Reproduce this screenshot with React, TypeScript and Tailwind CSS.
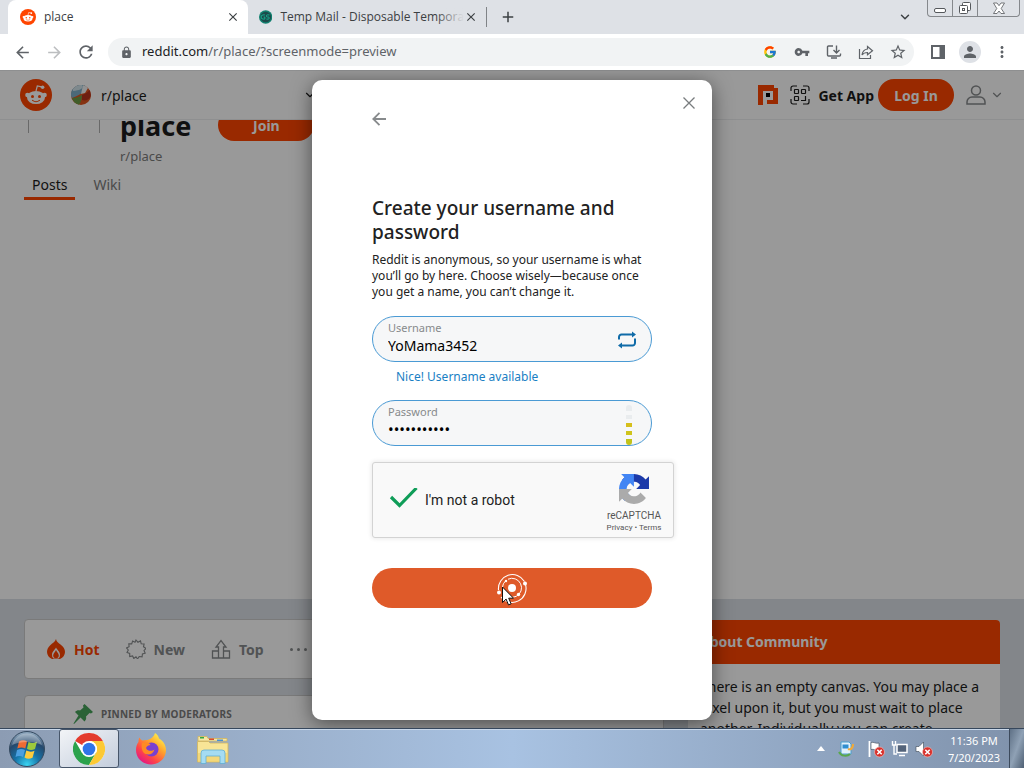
import { useState } from "react";
import type { ReactNode } from "react";
import { FcGoogle } from "react-icons/fc";
import {
  MdArrowBack,
  MdArrowForward,
  MdClose,
  MdLock,
  MdMoreVert,
  MdAdd,
  MdPerson,
  MdRefresh,
  MdStarBorder,
  MdVpnKey,
} from "react-icons/md";
import { ChevronDown } from "lucide-react";
import clsx from "clsx";

function SnooLogo({ className }: { className?: string }) {
  return (
    <svg viewBox="0 0 32 32" className={className} aria-hidden="true">
      <circle cx="16" cy="16" r="16" fill="#ff4500" />
      <path d="M16 12l1.300-5 4.500.8" fill="none" stroke="#fff" strokeWidth="1.2" />
      <circle cx="22.600" cy="8.200" r="1.800" fill="#fff" />
      <circle cx="7.400" cy="16" r="2.200" fill="#fff" />
      <circle cx="24.600" cy="16" r="2.200" fill="#fff" />
      <ellipse cx="16" cy="18.500" rx="9" ry="6.600" fill="#fff" />
      <circle cx="12.500" cy="17.400" r="1.500" fill="#ff4500" />
      <circle cx="19.500" cy="17.400" r="1.500" fill="#ff4500" />
      <path d="M12.500 21.400c2 1.500 5 1.500 7 0" fill="none" stroke="#ff4500" strokeWidth="1.1" strokeLinecap="round" />
    </svg>
  );
}

function TempMailIcon() {
  return (
    <svg viewBox="0 0 16 16" className="size-4" aria-hidden="true">
      <circle cx="8" cy="8" r="8" fill="#11806f" />
      <circle cx="8" cy="8" r="6.400" fill="#1d4a4b" />
      <path
        d="M7 5.500H5A2.500 2.500 0 0 0 5 10.500h2V8H5.500M12.500 5.500h-2.500a1.200 1.200 0 0 0 0 2.500h1a1.200 1.200 0 0 1 0 2.500H8.800"
        fill="none"
        stroke="#17b897"
        strokeWidth="1.100"
      />
    </svg>
  );
}

function TabStrip() {
  return (
    <div className="flex h-[34px] shrink-0 bg-[#dee1e6] pl-2 font-['Open_Sans',sans-serif] text-[12px] text-[#3c4043]">
      <div className="flex w-[240px] items-center rounded-t-lg bg-white px-3">
        <SnooLogo className="size-4" />
        <span className="ml-2 flex-1">place</span>
        <button aria-label="Close tab" className="-mr-1 text-[#3c4043]">
          <MdClose size={14} />
        </button>
      </div>
      <div className="flex w-[239px] items-center pl-[11px]">
        <TempMailIcon />
        <span className="relative ml-2 whitespace-nowrap">
          Temp Mail - Disposable Tempora
          <span className="absolute inset-y-0 right-0 w-7 bg-gradient-to-r from-transparent to-[#dee1e6]" />
        </span>
        <button aria-label="Close tab" className="ml-auto">
          <MdClose size={14} />
        </button>
        <span className="ml-2 h-5 w-px bg-[#808387]" />
      </div>
      <button aria-label="New tab" className="ml-3">
        <MdAdd size={18} />
      </button>
      <button aria-label="Search tabs" className="mr-[15px] ml-auto">
        <ChevronDown size={14} strokeWidth={2.5} />
      </button>
      <WindowControls />
    </div>
  );
}

function WindowControls() {
  return (
    <div className="mr-1 flex h-[17px] w-[93px] divide-x divide-[#85888c] rounded-b border border-t-0 border-[#85888c]">
      <button aria-label="Minimize" className="grid w-[25px] place-items-center">
        <svg viewBox="0 0 14 14" className="size-3.5" aria-hidden="true">
          <rect x="1.500" y="7.500" width="11" height="4" rx="1.500" fill="#fff" stroke="#55585c" />
        </svg>
      </button>
      <button aria-label="Restore" className="grid w-[25px] place-items-center">
        <svg viewBox="0 0 14 14" className="size-3.5" fill="#fff" stroke="#55585c" aria-hidden="true">
          <rect x="4.500" y="1.500" width="8" height="8" rx="1" />
          <rect x="1.500" y="4.500" width="8" height="8" rx="1" />
          <rect x="4.500" y="7.500" width="2" height="2" />
        </svg>
      </button>
      <button aria-label="Close" className="grid flex-1 place-items-center">
        <svg viewBox="0 0 14 14" className="size-3.5" aria-hidden="true">
          <path
            d="M1.500 2h3.500l2 2.700 2-2.700h3.500L9.200 7.500l3.300 5H9L7 10 5 12.500H1.500L4.800 7.500z"
            fill="#fff"
            stroke="#55585c"
            strokeWidth=".8"
          />
        </svg>
      </button>
    </div>
  );
}

function BarButton({ label, children }: { label: string; children: ReactNode }) {
  return (
    <button aria-label={label} className="grid w-8 shrink-0 place-items-center text-[#5f6368]">
      {children}
    </button>
  );
}

function Toolbar() {
  return (
    <div className="flex h-9 shrink-0 items-center bg-white px-1.5">
      <BarButton label="Back">
        <MdArrowBack size={19} />
      </BarButton>
      <BarButton label="Forward">
        <MdArrowForward size={19} className="text-[#bcbec0]" />
      </BarButton>
      <BarButton label="Reload">
        <MdRefresh size={20} />
      </BarButton>
      <div className="ml-1.5 flex h-7 flex-1 items-center rounded-full bg-[#f1f3f4] pl-3 text-[13px]">
        <MdLock size={13} className="text-[#5f6368]" />
        <p className="ml-[9px] flex-1 text-[#5f6368]">
          <span className="text-[#202124]">reddit.com</span>/r/place/?screenmode=preview
        </p>
        <BarButton label="Google Lens">
          <FcGoogle size={14} />
        </BarButton>
        <BarButton label="Passwords">
          <MdVpnKey size={16} />
        </BarButton>
        <BarButton label="Install app">
          <svg viewBox="0 0 16 16" className="size-4" fill="none" stroke="currentColor" strokeWidth="1.4" aria-hidden="true">
            <path d="M7 2H2.500A1 1 0 0 0 1.500 3v8a1 1 0 0 0 1 1h11a1 1 0 0 0 1-1V9.500M10.500 1.500v7M7.500 6l3 3 3-3M5 14h6" />
          </svg>
        </BarButton>
        <BarButton label="Share">
          <svg viewBox="0 0 16 16" className="size-4" fill="none" stroke="currentColor" strokeWidth="1.2" aria-hidden="true">
            <path d="M1.500 5v9.500h11V11M9.500 2.500l5 4.200-5 4V8.500C7 8.500 5.300 9.200 4 11c.4-3.300 2.300-5.600 5.500-6z" />
          </svg>
        </BarButton>
        <BarButton label="Bookmark">
          <MdStarBorder size={18} />
        </BarButton>
      </div>
      <div className="ml-2 flex">
        <BarButton label="Side panel">
          <svg viewBox="0 0 14 14" className="size-3.5" aria-hidden="true">
            <path d="M1 1h12v12H1z" fill="none" stroke="currentColor" strokeWidth="2" />
            <path d="M8.500 0H14v14H8.500z" fill="currentColor" />
          </svg>
        </BarButton>
        <BarButton label="Profile">
          <span className="grid size-[22px] place-items-center rounded-full bg-[#dee1e6]">
            <MdPerson size={18} />
          </span>
        </BarButton>
        <BarButton label="Menu">
          <MdMoreVert size={18} />
        </BarButton>
      </div>
    </div>
  );
}

function PlaceBall() {
  return (
    <svg viewBox="0 0 20 20" className="size-5" aria-hidden="true">
      <circle cx="10" cy="10" r="10" fill="#e0551f" />
      <path d="M0 11A10 10 0 0 1 15 1.300C15 5 12 9 1 13z" fill="#7fb0c8" />
      <path d="M2 4a10 10 0 0 1 9-4c2 3-1 5-9 6z" fill="#d3e4ec" />
      <path d="M12 .2a10 10 0 0 1 5 2.800l-3 5-4 1z" fill="#f0f4f5" />
      <path d="M1 13c4 0 7-1 10-3 0 4-1 7-3 9.800A10 10 0 0 1 1 13z" fill="#6d9b45" />
      <path d="M11 10c3-1 6-3 7.500-5a10 10 0 0 1 1 7c-2 3-5 4-8.500 3z" fill="#b8321b" />
    </svg>
  );
}

function RedditHeader() {
  return (
    <header className="relative z-10 flex h-[50px] items-center border-y border-[#edeff1] bg-white px-5">
      <a href="#home" aria-label="Reddit home">
        <SnooLogo className="size-8" />
      </a>
      <button className="ml-[19px] flex w-[246px] items-center text-[14px] text-[#1c1c1c]">
        <PlaceBall />
        <span className="ml-2.5">r/place</span>
        <ChevronDown size={14} className="ml-auto" />
      </button>
      <div className="ml-auto flex items-center">
        <a href="#place" aria-label="Place">
          <svg viewBox="0 0 20 20" className="size-5" aria-hidden="true">
            <path d="M4 4h12v12H4z" fill="#fff" />
            <path d="M0 0h16v3h4v16H9v-4h6V6H5v14H0z" fill="#ff4500" />
            <path d="M8 8h4v4H8z" fill="#000" />
          </svg>
        </a>
        <button className="ml-3 flex items-center gap-2 text-[14px] font-bold text-[#1c1c1c]">
          <svg viewBox="0 0 20 20" className="size-5" fill="none" stroke="currentColor" strokeWidth="1.200" aria-hidden="true">
            <path d="M1 6V3a2 2 0 0 1 2-2h4M13 1h4a2 2 0 0 1 2 2v3M19 14v3a2 2 0 0 1-2 2h-4M7 19H3a2 2 0 0 1-2-2v-3" />
            <rect x="4.500" y="4.500" width="4" height="4" rx=".5" />
            <rect x="11.500" y="4.500" width="4" height="4" rx=".5" />
            <rect x="4.500" y="11.500" width="4" height="4" rx=".5" />
            <path d="M11 15.500h4.500V11" />
          </svg>
          Get App
        </button>
        <button className="ml-1 h-8 w-[76px] rounded-full bg-[#ff4500] text-[14px] font-bold text-white">Log In</button>
        <button aria-label="User menu" className="ml-3 flex items-center text-[#878a8c]">
          <svg viewBox="0 0 20 20" className="size-5" fill="none" stroke="currentColor" strokeWidth="1.500" aria-hidden="true">
            <circle cx="10" cy="5.500" r="4.500" />
            <path d="M1 19v-2a5 5 0 0 1 5-5h8a5 5 0 0 1 5 5v2z" />
          </svg>
          <ChevronDown size={14} className="ml-1" />
        </button>
      </div>
    </header>
  );
}

function CommunityBanner() {
  return (
    <div className="-mt-[11px] bg-white px-6">
      <div className="flex">
        <div className="ml-1 h-6 w-[72px] border-x border-[#b0b0b0]" />
        <div className="ml-5">
          <div className="flex gap-[27px]">
            <h1 className="text-[27px] leading-[34px] font-bold text-[#1c1c1c]">place</h1>
            <button className="h-8 w-24 rounded-full bg-[#ff4500] text-[14px] font-bold text-white">Join</button>
          </div>
          <p className="mt-1 text-[13px] leading-[18px] text-[#7c7c7c]">r/place</p>
        </div>
      </div>
      <nav className="mt-2 flex gap-2.5 text-[14px] leading-6 text-[#1c1c1c]">
        <a href="#posts" className="border-b-[3px] border-[#ff4500] px-2">
          Posts
        </a>
        <a href="#wiki" className="px-2 text-[#7c7c7c]">
          Wiki
        </a>
      </nav>
      <div className="h-[399px]" />
    </div>
  );
}

const sortIcons: Record<string, ReactNode> = {
  Hot: (
    <g>
      <path
        d="M10 0c.5 2.500 2 3.500 4.500 5.500C17.500 8 19 10 19 13a8 8 0 0 1-5 7H6a8 8 0 0 1-5-7c0-2.500 1-4.800 3-6.500C6.500 4 9 3 10 0z"
        fill="currentColor"
      />
      <path d="M10 8.500c.8 2 4 4 4 7a4.800 4.800 0 0 1-1.500 4h-5a4.800 4.800 0 0 1-1.500-4c0-3 3.200-5 4-7z" fill="#fff" />
      <path d="M10 11c.8 2 2.800 3.500 2.800 5.500a2.800 2.800 0 0 1-5.600 0c0-2 2-3.500 2.800-5.500z" fill="currentColor" />
    </g>
  ),
  New: (
    <path
      d="M10 1l1.900 2.200 2.600-1.300.7 2.900 2.900.2-.6 2.800L20 9.500l-2 2 1.200 2.700-2.800.8-.3 2.900-2.900-.4L11.500 20 10 17.800 7.800 19.500l-1.200-2.600-2.900.6v-3l-2.700-1L2.300 11 .5 8.900l2.600-1.200-.3-2.900 2.900.1.900-2.800L9 3.200z"
      fill="none"
      stroke="currentColor"
      strokeWidth="1.100"
    />
  ),
  Top: (
    <path
      d="M7.500 19V8H5l5-6.500L15 8h-2.500v11M7.500 12h-6v7h17v-7h-6M7.500 19h5"
      fill="none"
      stroke="currentColor"
      strokeWidth="1.300"
    />
  ),
};

function Feed() {
  return (
    <div className="flex gap-6 bg-[#dae0e6] px-6 pt-5">
      <main className="flex-1">
        <div className="flex h-[60px] items-center gap-[26px] rounded border border-[#ccc] bg-white pl-[21px] text-[14px] font-bold text-[#878a8c]">
          {Object.keys(sortIcons).map((name) => (
            <button key={name} className={clsx("flex items-center gap-2", name === "Hot" && "text-[#ff4500]")}>
              <svg viewBox="0 0 20 20" className="size-5" aria-hidden="true">
                {sortIcons[name]}
              </svg>
              {name}
            </button>
          ))}
          <button aria-label="More sorts" className="flex gap-1">
            <span className="size-[3px] rounded-full bg-current" />
            <span className="size-[3px] rounded-full bg-current" />
            <span className="size-[3px] rounded-full bg-current" />
          </button>
        </div>
        <article className="mt-4 flex h-40 items-start gap-2 rounded border border-[#ccc] bg-white pt-2 pl-12">
          <svg viewBox="0 0 20 20" className="size-5" fill="#46a35a" aria-hidden="true">
            <path d="M11.500 0L20 8l-2 1.500-1.500-.5-3.500 3.500c.5 2 0 3.500-1.500 5L7.500 13.500 1 20l-.500-.5L5.500 11.500 2 8c1.500-1.500 3-2 5-1.500L10.500 3.500 10 1.500z" />
          </svg>
          <span className="text-[10px] leading-5 font-bold tracking-wide text-[#7c7c7c]">PINNED BY MODERATORS</span>
        </article>
      </main>
      <aside className="w-[312px] pt-px">
        <section className="overflow-hidden rounded bg-white">
          <h2 className="bg-[#ff4500] p-3 text-[14px] leading-5 font-bold text-white">About Community</h2>
          <p className="p-3 text-[14px] leading-[21px] text-[#1c1c1c]">
            There is an empty canvas. You may place a pixel upon it, but you must wait to place another. Individually you
            can create
          </p>
        </section>
      </aside>
    </div>
  );
}

function StrengthMeter() {
  return (
    <span className="absolute top-1 right-[19px] flex flex-col gap-1" aria-hidden="true">
      <span className="h-1.5 w-1.5 rounded-t bg-[#e9ecee]" />
      <span className="h-1 w-1.5 bg-[#e9ecee]" />
      <span className="h-1 w-1.5 bg-[#d6bf1c]" />
      <span className="h-1 w-1.5 bg-[#cfc41c]" />
      <span className="h-1.5 w-1.5 rounded-b bg-[#c2c31a]" />
    </span>
  );
}

type FieldProps = {
  id: string;
  label: string;
  type: string;
  value: string;
  onChange: (value: string) => void;
  children: ReactNode;
};

function Field({ id, label, type, value, onChange, children }: FieldProps) {
  return (
    <div className="relative flex h-[46px] flex-col rounded-full border border-[#4a9ad4] bg-[#f6f7f8] px-[15px] pt-1">
      <label htmlFor={id} className="text-[11px] leading-[14px] text-[#878a8c]">
        {label}
      </label>
      <input
        id={id}
        type={type}
        value={value}
        onChange={(e) => onChange(e.target.value)}
        className={clsx(
          "h-5 w-[200px] bg-transparent text-black outline-none",
          type === "password" ? "text-[15px]" : "text-[14px]",
        )}
      />
      {children}
    </div>
  );
}

function Recaptcha() {
  return (
    <div className="mt-4 flex h-[76px] w-[302px] items-center rounded-[3px] border border-[#d3d3d3] bg-[#f9f9f9] pl-4 font-[Roboto,sans-serif] shadow-[0_0_4px_1px_rgba(0,0,0,0.08)]">
      <label className="flex flex-1 items-center gap-[7px] text-[14px] text-[#222]">
        <input type="checkbox" defaultChecked className="peer sr-only" />
        <svg viewBox="0 0 29 24" className="h-6 w-[29px]" aria-hidden="true">
          <path d="M2 9l8.500 8.500L27.500 0" fill="none" stroke="#0f9d58" strokeWidth="3.200" />
        </svg>
        I'm not a robot
      </label>
      <div className="flex w-[78px] flex-col items-center pt-2 text-[#555]">
        <svg viewBox="0 0 64 64" className="size-[30px]" aria-hidden="true">
          <path
            d="M64 31.955l-.033-1.370V4.687l-7.160 7.160C50.948 4.674 42.033.093 32.050.093c-10.400 0-19.622 4.960-25.458 12.640l11.736 11.860a15.550 15.550 0 0 1 4.754-5.334c2.050-1.600 4.952-2.906 8.968-2.906.485 0 .860.057 1.135.163 4.976.393 9.288 3.140 11.828 7.124l-8.307 8.307L64 31.953"
            fill="#1c3aa9"
          />
          <path
            d="M31.862.094l-1.370.033H4.594l7.160 7.160C4.580 13.147 0 22.060 0 32.046c0 10.400 4.960 19.622 12.640 25.458L24.500 45.768a15.550 15.550 0 0 1-5.334-4.754c-1.600-2.050-2.906-4.952-2.906-8.968 0-.485.057-.860.163-1.135.393-4.976 3.140-9.288 7.124-11.828l8.307 8.307L31.860.095"
            fill="#4285f4"
          />
          <path
            d="M.001 32.045l.033 1.370v25.898l7.160-7.160c5.860 7.173 14.774 11.754 24.760 11.754 10.400 0 19.622-4.960 25.458-12.640l-11.736-11.860a15.550 15.550 0 0 1-4.754 5.334c-2.050 1.600-4.952 2.906-8.968 2.906-.485 0-.860-.057-1.135-.163-4.976-.393-9.288-3.140-11.828-7.124l8.307-8.307c-10.522.040-22.400.066-27.295-.005"
            fill="#ababab"
          />
        </svg>
        <span className="mt-1.5 text-[10px] leading-3">reCAPTCHA</span>
        <span className="text-[8px] leading-3">
          <a href="#privacy">Privacy</a> • <a href="#terms">Terms</a>
        </span>
      </div>
    </div>
  );
}

function SignupModal() {
  const [username, setUsername] = useState("YoMama3452");
  const [password, setPassword] = useState("placepixel1");

  return (
    <div className="absolute inset-0 z-20 flex justify-center bg-black/40 pt-2.5 pb-2">
      <div
        role="dialog"
        aria-label="Sign up"
        className="relative w-[400px] rounded-[10px] bg-white px-[60px] pt-[31px] text-[#222] shadow-[0_4px_20px_rgba(0,0,0,0.5)]"
      >
        <button aria-label="Close" className="absolute top-4 right-4 text-[#787c7e]">
          <svg viewBox="0 0 14 14" className="size-3.5" stroke="currentColor" strokeWidth="1.300" aria-hidden="true">
            <path d="M1.500 1.500l11 11M12.500 1.500l-11 11" />
          </svg>
        </button>
        <button aria-label="Back" className="block text-[#878a8c]">
          <svg viewBox="0 0 16 16" className="size-4" fill="none" stroke="currentColor" strokeWidth="1.800" aria-hidden="true">
            <path d="M14 8H1.500M7.500 1.800L1.300 8l6.200 6.200" />
          </svg>
        </button>
        <form onSubmit={(e) => e.preventDefault()} className="mt-[69px]">
          <h2 className="text-[19px] leading-6 font-medium">Create your username and password</h2>
          <p className="mt-2 text-[12px] leading-4">
            Reddit is anonymous, so your username is what you’ll go by here. Choose wisely—because once you get a name,
            you can’t change it.
          </p>
          <div className="mt-4">
            <Field id="username" label="Username" type="text" value={username} onChange={setUsername}>
              <button type="button" aria-label="Suggest a username" className="absolute top-[13px] right-3.5 text-[#0f6ba8]">
                <svg viewBox="0 0 20 20" className="size-5" aria-hidden="true">
                  <path
                    d="M2 9.500V7a2.500 2.500 0 0 1 2.500-2.500H16M18 8.500V13a2.500 2.500 0 0 1-2.500 2.500H4"
                    fill="none"
                    stroke="currentColor"
                    strokeWidth="2"
                  />
                  <path d="M15 1.500l4 3-4 3zM5 12.500l-4 3 4 3z" fill="currentColor" />
                </svg>
              </button>
            </Field>
          </div>
          <p className="mt-[7px] ml-6 text-[12px] leading-4 text-[#1a7fc4]">Nice! Username available</p>
          <div className="mt-[15px]">
            <Field id="password" label="Password" type="password" value={password} onChange={setPassword}>
              <StrengthMeter />
            </Field>
          </div>
          <Recaptcha />
          <button
            type="submit"
            aria-label="Sign up"
            className="relative mt-[30px] grid h-10 w-full place-items-center rounded-full bg-[#df5a29]"
          >
            <svg viewBox="0 0 32 32" className="size-8" fill="none" stroke="#fff" aria-hidden="true">
              <path d="M28.500 9.500A14 14 0 0 0 2.500 18M5 25a14 14 0 0 0 24.500-12.500" strokeWidth="1.100" />
              <path d="M12 7.200A9.500 9.500 0 1 1 7.500 20" strokeWidth="1" />
              <path d="M6.500 15a9.500 9.500 0 0 1 3-6" strokeWidth="1" />
              <circle cx="16" cy="16" r="4" fill="#fff" stroke="none" />
              <circle cx="29" cy="11.500" r="2" fill="#fff" stroke="none" />
              <circle cx="3" cy="20.500" r="2" fill="#fff" stroke="none" />
              <circle cx="22.500" cy="22.500" r="1.700" fill="#fff" stroke="none" />
              <circle cx="10" cy="9" r="1.200" fill="#fff" stroke="none" />
            </svg>
            <svg viewBox="0 0 12 20" className="absolute top-[18px] left-[130px] h-5 w-3" aria-hidden="true">
              <path d="M.5 1v15.500l3.600-3.400 2.400 5.800 2.600-1.100-2.400-5.600h4.800z" fill="#fff" stroke="#111" />
            </svg>
          </button>
        </form>
      </div>
    </div>
  );
}

function StartOrb() {
  return (
    <svg viewBox="0 0 36 36" className="size-9" aria-hidden="true">
      <defs>
        <radialGradient id="orb" cx="50%" cy="95%" r="90%">
          <stop offset="0" stopColor="#39d4f2" />
          <stop offset=".4" stopColor="#1673a8" />
          <stop offset=".75" stopColor="#25486c" />
          <stop offset="1" stopColor="#8aa3ba" />
        </radialGradient>
      </defs>
      <circle cx="18" cy="18" r="17.500" fill="url(#orb)" stroke="#34495f" />
      <path d="M10 10.500c3-1.800 5.500-1.700 8 0l-1.700 7c-2.700-1.500-5-1.500-8 0z" fill="#ee6b33" />
      <path d="M19.500 11c3 1.500 5.500 1.500 8.500-.5l-2 7.500c-3 1.500-5.500 1.300-8-.2z" fill="#9cc93c" />
      <path d="M8 19c3-1.500 5.500-1.500 8 0l-2 7c-2.500-1.500-5-1.300-7.500 0z" fill="#4b9fe0" />
      <path d="M17.300 19.500c3 1.500 5.500 1.500 8.200.2l-2 7c-3 1.500-5.500 1.300-8-.2z" fill="#fdcb3e" />
      <path d="M3 14a15.500 15.500 0 0 1 30 0c-8-4-22-4-30 0z" fill="#fff" opacity=".28" />
    </svg>
  );
}

function ChromeIcon() {
  return (
    <svg viewBox="0 0 32 32" className="size-8" aria-hidden="true">
      <circle cx="16" cy="16" r="16" fill="#fff" />
      <path d="M16 16L2.140 8A16 16 0 0 1 29.860 8H16z" fill="#e33b2e" />
      <path d="M2.140 8A16 16 0 0 0 16 32l6.930-12L16 16 9.070 20z" fill="#2ba24c" />
      <path d="M29.860 8A16 16 0 0 1 16 32l6.930-12A8 8 0 0 0 16 8z" fill="#fcc934" />
      <circle cx="16" cy="16" r="8" fill="#fff" />
      <circle cx="16" cy="16" r="6.300" fill="#2f74e8" />
    </svg>
  );
}

function FirefoxIcon() {
  return (
    <svg viewBox="0 0 32 32" className="size-8" aria-hidden="true">
      <defs>
        <linearGradient id="fox" x1=".85" y1=".1" x2=".2" y2=".95">
          <stop offset="0" stopColor="#fff04a" />
          <stop offset=".35" stopColor="#ffa02c" />
          <stop offset=".7" stopColor="#ff4647" />
          <stop offset="1" stopColor="#e31587" />
        </linearGradient>
      </defs>
      <path
        d="M20 0c2 1 3.500 3 4 5.500 4.500 2.500 7 7 7 11.500 0 8-6.500 14.500-15 14.500S1 25 1 17c0-3.500 1-6 2.500-8 0-2 .3-3.500 1-4.500.7 1.500 1.700 2.500 3 3C9 7 11 6.800 12.500 7 16 6 19 3.500 20 0z"
        fill="url(#fox)"
      />
      <circle cx="16.500" cy="16.500" r="7" fill="#7a3fd0" />
      <path d="M7 10c4-1.500 7-.5 8.500 2-3 .5-5 2-4 4 1.500 2.500 6 2 8 .5-1 4-5 6-9 4.500C7 19.500 6 14 7 10z" fill="#ff8a24" />
    </svg>
  );
}

function ExplorerIcon() {
  return (
    <svg viewBox="0 0 32 32" className="size-8" aria-hidden="true">
      <path d="M1 3.500h9l1 2h19V8H1z" fill="#f6e7a6" stroke="#d3b65c" strokeWidth=".8" />
      <path d="M3 4h4v1.500H3z" fill="#35a845" />
      <path d="M12 5.500h5V7h-5z" fill="#d94b32" />
      <path d="M20 6.500h6V8h-6z" fill="#4a90d0" />
      <path d="M.500 8.500h11l1.500 1.500h18v19H.500z" fill="#f8e596" stroke="#d3b65c" strokeWidth=".8" />
      <path d="M1 20h30v9H1z" fill="#f0cf68" opacity=".6" />
      <path d="M4 30.500V20a3 3 0 0 1 3-3h18a3 3 0 0 1 3 3v10.500h-5V23H9v7.500z" fill="#a5dcf2" stroke="#62aed3" strokeWidth=".8" />
    </svg>
  );
}

function ErrorBadge() {
  return (
    <g>
      <circle cx="12.500" cy="12" r="5" fill="#d8302b" stroke="#f4c6c3" strokeWidth=".6" />
      <path d="M10.300 9.800l4.400 4.400M14.700 9.800l-4.400 4.400" stroke="#fff" strokeWidth="1.600" />
    </g>
  );
}

function Taskbar() {
  return (
    <footer className="flex h-10 shrink-0 items-stretch border-t border-[#36475c] bg-gradient-to-r from-[#8c9cb3] via-[#a8c2e2] to-[#8092ab] shadow-[inset_0_1px_0_#c9d8ea]">
      <button aria-label="Start" className="ml-[9px] self-center">
        <StartOrb />
      </button>
      <button
        aria-label="Google Chrome"
        className="ml-3.5 grid w-[60px] place-items-center rounded-[3px] border border-[#47566a] bg-gradient-to-br from-[#f2f4f7] to-[#c3cddc]"
      >
        <ChromeIcon />
      </button>
      <button aria-label="Firefox" className="ml-4">
        <FirefoxIcon />
      </button>
      <button aria-label="File Explorer" className="ml-[30px]">
        <ExplorerIcon />
      </button>
      <div className="ml-auto flex items-center">
        <button aria-label="Show hidden icons">
          <svg viewBox="0 0 8 5" className="h-[5px] w-2" aria-hidden="true">
            <path d="M0 5l4-5 4 5z" fill="#fff" />
          </svg>
        </button>
        <div className="ml-3 flex items-center gap-2.5">
          <svg viewBox="0 0 18 18" className="size-[18px]" aria-hidden="true">
            <path d="M4 2h8l2 2v10H4z" fill="#dff0fb" stroke="#4b9fd0" />
            <path d="M5.500 4.500h6v4h-6z" fill="#2f8fd0" />
            <path d="M2 12c2 4 8 5 11 2" fill="none" stroke="#59a84c" strokeWidth="2" />
            <path d="M11 9c3 1 5-1 5-5" fill="none" stroke="#f0a93a" strokeWidth="2.200" />
          </svg>
          <svg viewBox="0 0 18 18" className="ml-0.5 size-[18px]" aria-hidden="true">
            <path d="M2.500 1v16" stroke="#fff" strokeWidth="1.800" />
            <path d="M4 2.500c3-1 4 1.500 8 .5v7c-4 1-5-1.500-8-.5z" fill="#fff" stroke="#3b4654" strokeWidth=".6" />
            <ErrorBadge />
          </svg>
          <svg viewBox="0 0 18 18" className="-ml-1 size-[18px]" aria-hidden="true">
            <path d="M6 4.500h10v8H6zM8 15.500h6" fill="#53637a" stroke="#fff" strokeWidth="1.500" />
            <path d="M1.500 1v4h3V1M3 5v9h3" fill="none" stroke="#fff" strokeWidth="1.400" />
          </svg>
          <svg viewBox="0 0 18 18" className="-ml-1 size-[18px]" aria-hidden="true">
            <path d="M1 6.500h3L8.500 2v14L4 11.500H1z" fill="#fff" stroke="#3b4654" strokeWidth=".6" />
            <ErrorBadge />
          </svg>
        </div>
        <div className="ml-3.5 w-[54px] text-center text-[11px] leading-[17px] whitespace-nowrap text-white">
          <p>11:36 PM</p>
          <p>7/20/2023</p>
        </div>
      </div>
      <button
        aria-label="Show desktop"
        className="ml-2 w-[15px] border-l border-[#3c4a5c] bg-gradient-to-br from-[#5f7186] via-[#8fa1b5] to-[#4f6074]"
      />
    </footer>
  );
}

export default function App() {
  return (
    <div className="flex h-screen flex-col overflow-hidden font-['Noto_Sans',sans-serif]">
      <TabStrip />
      <Toolbar />
      <div className="relative min-h-0 flex-1 overflow-hidden bg-[#dae0e6]">
        <RedditHeader />
        <CommunityBanner />
        <Feed />
        <SignupModal />
      </div>
      <Taskbar />
    </div>
  );
}
